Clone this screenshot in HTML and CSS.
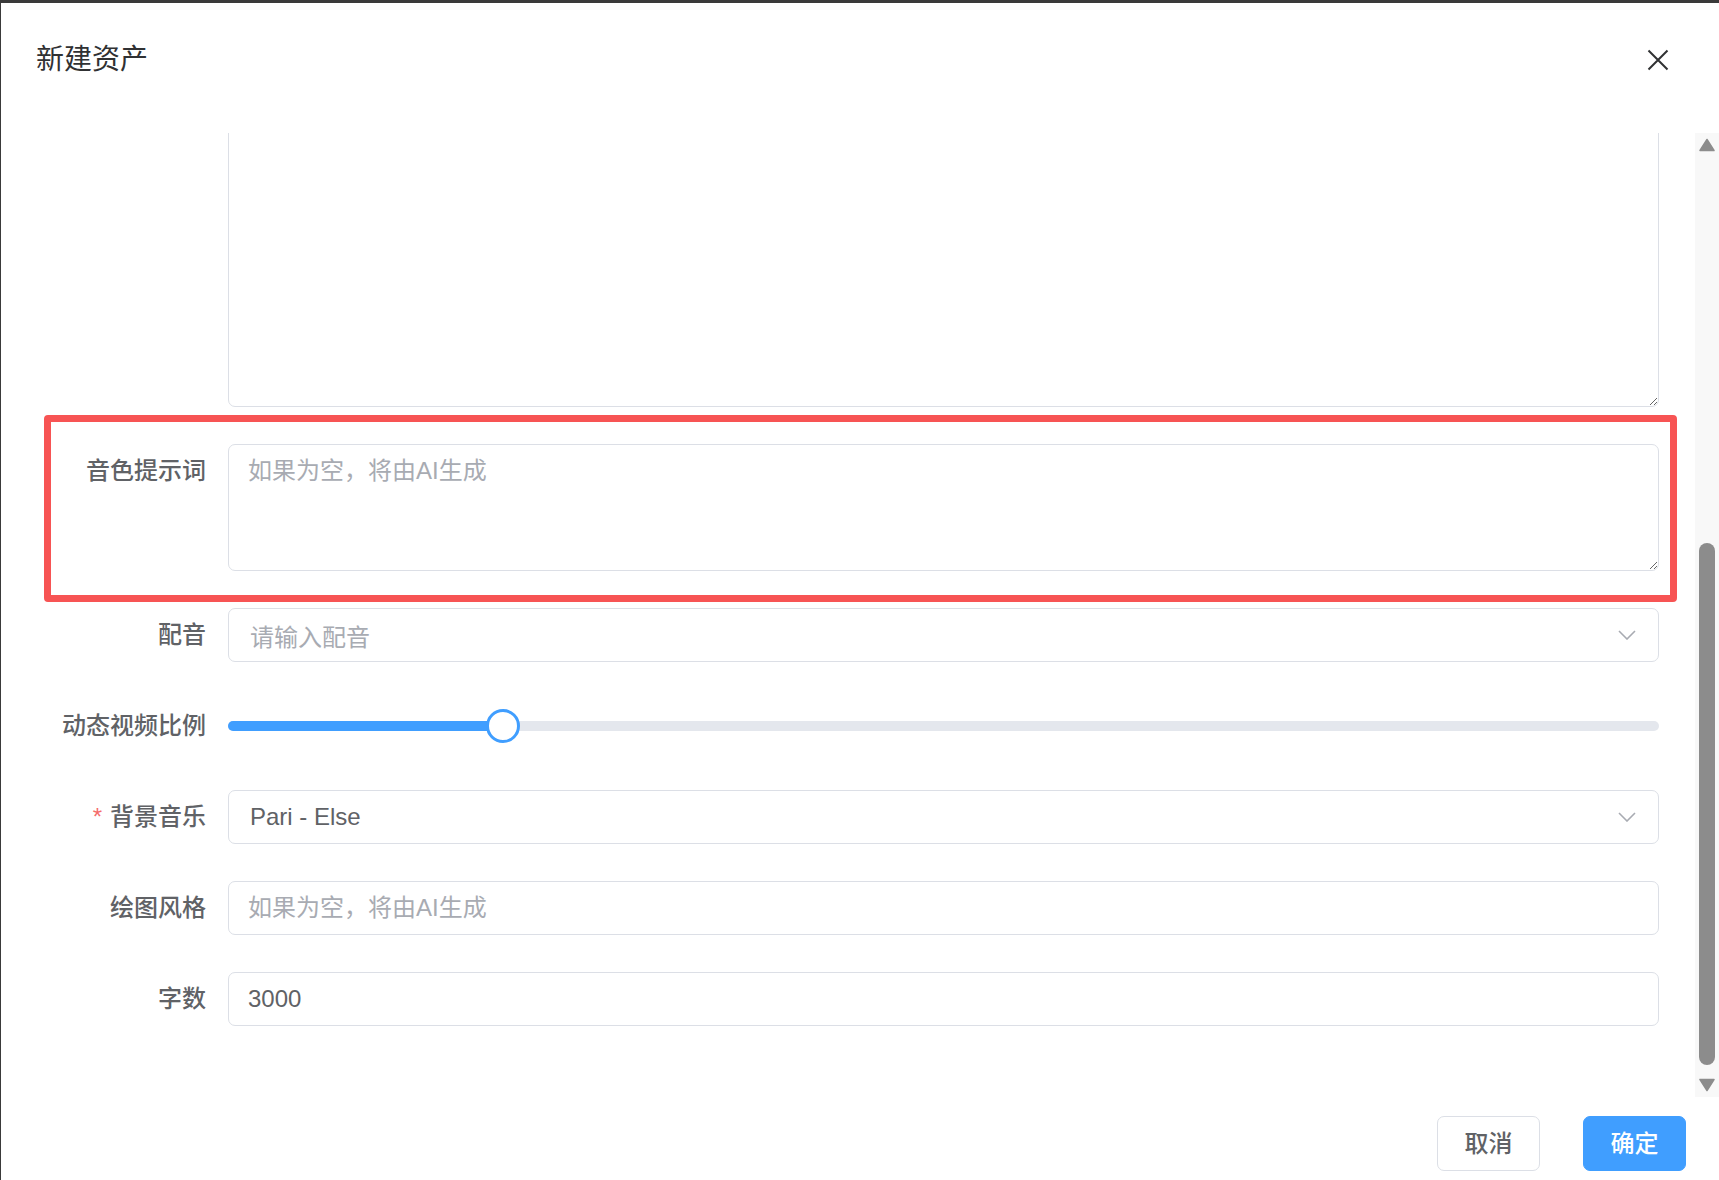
FILE: index.html
```html
<!DOCTYPE html>
<html lang="zh-CN">
<head>
    <meta charset="UTF-8">
    <meta name="viewport" content="width=device-width, initial-scale=1.0">
    <title>新建资产</title>
    <link rel="stylesheet" href="styles.css">
</head>
<body>

<div class="dialog">
    <div class="dialog-header">
        <span class="dialog-title">新建资产</span>
        <button class="close-btn" type="button" aria-label="关闭">
            <svg viewBox="0 0 22 22" width="22" height="22">
                <path d="M1.5 1.5 L20.5 20.5 M20.5 1.5 L1.5 20.5" stroke="#303133" stroke-width="2" fill="none"/>
            </svg>
        </button>
    </div>

    <div class="dialog-body">
        <div class="scroll-view">
            <form class="form">
                <div class="form-item">
                    <label class="form-label" for="desc"></label>
                    <div class="form-content">
                        <textarea id="desc" class="textarea textarea-lg"></textarea>
                    </div>
                </div>

                <div class="form-item">
                    <!-- highlighted row -->
                    <div class="highlight"></div>
                    <label class="form-label" for="voice-prompt">音色提示词</label>
                    <div class="form-content">
                        <textarea id="voice-prompt" class="textarea textarea-sm" placeholder="如果为空，将由AI生成"></textarea>
                    </div>
                </div>

                <div class="form-item">
                    <label class="form-label">配音</label>
                    <div class="form-content">
                        <div class="select">
                            <span class="select-placeholder">请输入配音</span>
                            <svg class="select-arrow" viewBox="0 0 18 10" width="18" height="10">
                                <path d="M1 1 L9 9 L17 1" stroke="#a8abb2" stroke-width="1.6" fill="none"/>
                            </svg>
                        </div>
                    </div>
                </div>

                <div class="form-item">
                    <label class="form-label">动态视频比例</label>
                    <div class="form-content">
                        <div class="slider">
                            <div class="slider-runway">
                                <div class="slider-bar" style="width: 19.2%"></div>
                                <div class="slider-thumb" style="left: 19.2%"></div>
                            </div>
                        </div>
                    </div>
                </div>

                <div class="form-item">
                    <label class="form-label is-required">背景音乐</label>
                    <div class="form-content">
                        <div class="select">
                            <span class="select-value">Pari - Else</span>
                            <svg class="select-arrow" viewBox="0 0 18 10" width="18" height="10">
                                <path d="M1 1 L9 9 L17 1" stroke="#a8abb2" stroke-width="1.6" fill="none"/>
                            </svg>
                        </div>
                    </div>
                </div>

                <div class="form-item">
                    <label class="form-label" for="draw-style">绘图风格</label>
                    <div class="form-content">
                        <input id="draw-style" class="input" type="text" placeholder="如果为空，将由AI生成">
                    </div>
                </div>

                <div class="form-item">
                    <label class="form-label" for="word-count">字数</label>
                    <div class="form-content">
                        <input id="word-count" class="input" type="text" value="3000">
                    </div>
                </div>
            </form>
        </div>

        <div class="scrollbar">
            <div class="scroll-arrow">
                <svg viewBox="0 0 16 14" width="16" height="14"><path d="M8 1.5 L15 12.5 L1 12.5 Z" fill="#8c8c8c" stroke="#8c8c8c" stroke-width="1.5" stroke-linejoin="round"/></svg>
            </div>
            <div class="scroll-thumb"></div>
            <div class="scroll-space"></div>
            <div class="scroll-arrow">
                <svg viewBox="0 0 16 14" width="16" height="14"><path d="M1 1.5 L15 1.5 L8 12.5 Z" fill="#8c8c8c" stroke="#8c8c8c" stroke-width="1.5" stroke-linejoin="round"/></svg>
            </div>
        </div>
    </div>

    <div class="dialog-footer">
        <button class="btn" type="button">取消</button>
        <button class="btn btn-primary" type="button">确定</button>
    </div>
</div>

</body>
</html>
```

FILE: styles.css
```css
* {
    box-sizing: border-box;
}
html, body {
    margin: 0;
    height: 100%;
}
body {
    background-color: #3a3a3a;
    font-family: "Liberation Sans", "Noto Sans CJK SC", sans-serif;
    overflow: hidden;
}
.dialog {
    margin: 3px 0 0 1px;
    height: 1177px;
    background-color: #ffffff;
    display: flex;
    flex-direction: column;
}
.dialog-header {
    flex: none;
    height: 130px;
    display: flex;
    align-items: flex-start;
    justify-content: space-between;
    padding: 37px 50px 0 35px;
}
.dialog-title {
    font-size: 28px;
    line-height: 40px;
    color: #303133;
}
.close-btn {
    border: 0;
    background: none;
    padding: 0;
    margin-top: 9px;
    width: 22px;
    height: 22px;
    cursor: pointer;
}
.close-btn svg {
    display: block;
}
.dialog-body {
    flex: none;
    height: 964px;
    display: flex;
}
.scroll-view {
    flex: 1;
    overflow: hidden;
    display: flex;
    flex-direction: column;
    justify-content: flex-end;
    padding: 0 36px 34px 35px;
}
.form {
    flex: none;
    margin: 0;
}
.form-item {
    position: relative;
    display: flex;
    margin-bottom: 37px;
}
.form-label {
    flex: none;
    width: 192px;
    padding-right: 22px;
    text-align: right;
    font-size: 24px;
    line-height: 54px;
    color: #606266;
    font-weight: 500;
}
.form-label.is-required::before {
    content: "*";
    color: #f56c6c;
    margin-right: 8px;
}
.form-content {
    flex: 1;
    min-width: 0;
}
.highlight {
    position: absolute;
    top: -29px;
    bottom: -31px;
    left: 8px;
    right: -18px;
    border: 7px solid #f75454;
    border-radius: 4px;
    pointer-events: none;
}
.input,
.textarea {
    display: block;
    width: 100%;
    border: 1px solid #dcdfe6;
    border-radius: 7px;
    font-family: inherit;
    font-size: 24px;
    color: #606266;
    background-color: #ffffff;
    outline: none;
}
.input {
    height: 54px;
    padding: 0 19px;
}
.textarea {
    padding: 8px 19px;
    line-height: 36px;
    resize: vertical;
}
.input::placeholder,
.textarea::placeholder {
    color: #a8abb2;
}
.textarea-lg {
    height: 340px;
}
.textarea-sm {
    height: 127px;
}
.select {
    height: 54px;
    border: 1px solid #dcdfe6;
    border-radius: 7px;
    padding: 0 22px 0 21px;
    display: flex;
    align-items: center;
    justify-content: space-between;
    font-size: 24px;
}
.select-placeholder {
    color: #a8abb2;
}
.select-value {
    color: #606266;
}
.select-arrow {
    display: block;
}
.slider {
    height: 54px;
    display: flex;
    align-items: center;
}
.slider-runway {
    position: relative;
    flex: 1;
    height: 10px;
    border-radius: 5px;
    background-color: #e4e7ed;
}
.slider-bar {
    height: 100%;
    border-radius: 5px 0 0 5px;
    background-color: #409eff;
}
.slider-thumb {
    position: absolute;
    top: 50%;
    width: 34px;
    height: 34px;
    margin: -17px 0 0 -17px;
    border: 3px solid #409eff;
    border-radius: 50%;
    background-color: #ffffff;
}
.scrollbar {
    flex: none;
    width: 24px;
    background-color: #f8f8f8;
    display: flex;
    flex-direction: column;
    align-items: center;
}
.scroll-arrow {
    height: 24px;
    display: flex;
    align-items: center;
    justify-content: center;
}
.scroll-arrow svg {
    display: block;
}
.scroll-thumb {
    width: 16px;
    height: 522px;
    margin-top: 386px;
    border-radius: 8px;
    background-color: #8c8c8c;
}
.scroll-space {
    flex: 1;
}
.dialog-footer {
    display: flex;
    justify-content: flex-end;
    gap: 43px;
    padding: 19px 33px 0 0;
}
.btn {
    width: 103px;
    height: 55px;
    padding: 0 0 4px;
    border: 1px solid #dcdfe6;
    border-radius: 7px;
    background-color: #ffffff;
    color: #606266;
    font-family: inherit;
    font-size: 24px;
    font-weight: 500;
    cursor: pointer;
}
.btn-primary {
    background-color: #409eff;
    border-color: #409eff;
    color: #ffffff;
}
```
